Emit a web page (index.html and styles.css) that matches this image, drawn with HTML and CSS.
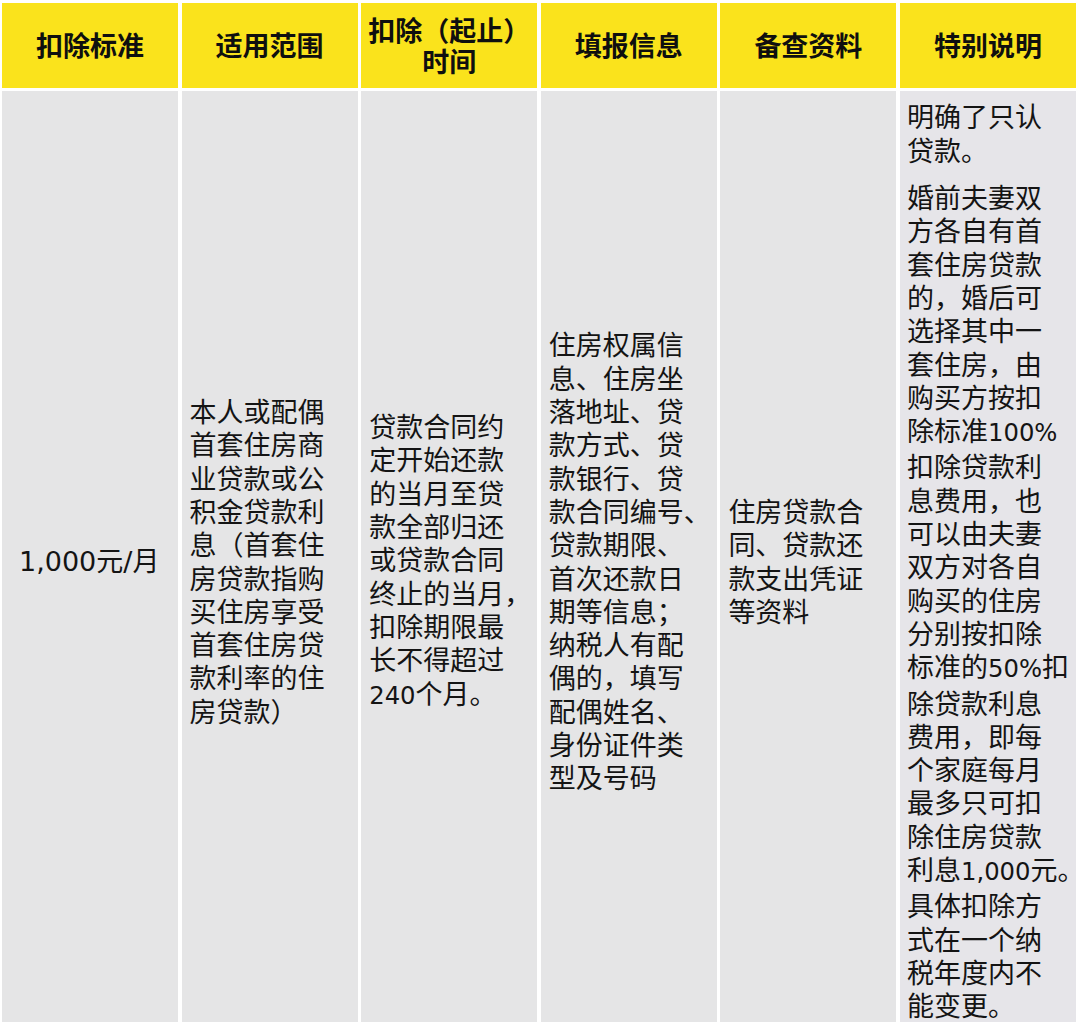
FILE: index.html
```html
<!DOCTYPE html>
<html lang="zh-CN">
<head>
<meta charset="utf-8">
<title>住房贷款利息扣除</title>
<link rel="stylesheet" href="styles.css">
</head>
<body>
<div class="table">
  <div class="th">扣除标准</div>
  <div class="th">适用范围</div>
  <div class="th">扣除（起止）<br>时间</div>
  <div class="th">填报信息</div>
  <div class="th">备查资料</div>
  <div class="th">特别说明</div>

  <div class="td first"><p><span class="num big">1,000</span>元<span class="num big">/</span>月</p></div>
  <div class="td"><p>本人或配偶<br>首套住房商<br>业贷款或公<br>积金贷款利<br>息（首套住<br>房贷款指购<br>买住房享受<br>首套住房贷<br>款利率的住<br>房贷款）</p></div>
  <div class="td"><p>贷款合同约<br>定开始还款<br>的当月至贷<br>款全部归还<br>或贷款合同<br>终止的当月，<br>扣除期限最<br>长不得超过<br><span class="num">240</span>个月。</p></div>
  <div class="td"><p>住房权属信<br>息、住房坐<br>落地址、贷<br>款方式、贷<br>款银行、贷<br>款合同编号、<br>贷款期限、<br>首次还款日<br>期等信息；<br>纳税人有配<br>偶的，填写<br>配偶姓名、<br>身份证件类<br>型及号码</p></div>
  <div class="td"><p>住房贷款合<br>同、贷款还<br>款支出凭证<br>等资料</p></div>
  <div class="td last"><p>明确了只认<br>贷款。</p><p>婚前夫妻双<br>方各自有首<br>套住房贷款<br>的，婚后可<br>选择其中一<br>套住房，由<br>购买方按扣<br>除标准<span class="num">100%</span><br>扣除贷款利<br>息费用，也<br>可以由夫妻<br>双方对各自<br>购买的住房<br>分别按扣除<br>标准的<span class="num">50%</span>扣<br>除贷款利息<br>费用，即每<br>个家庭每月<br>最多只可扣<br>除住房贷款<br>利息<span class="num">1,000</span>元。<br>具体扣除方<br>式在一个纳<br>税年度内不<br>能变更。</p></div>
</div>
</body>
</html>
```

FILE: styles.css
```css
html, body {
  margin: 0;
  padding: 0;
  background: #ffffff;
}

body {
  width: 1080px;
  height: 1025px;
  overflow: hidden;
  font-family: "Noto Sans CJK SC", "Noto Sans", sans-serif;
  color: #141414;
}

.table {
  display: grid;
  grid-template-columns: repeat(6, 176px);
  grid-template-rows: 85px 931px;
  column-gap: 3.6px;
  row-gap: 3px;
  padding: 3px 0 0 2px;
}

.th {
  background: #fae31c;
  display: flex;
  align-items: center;
  justify-content: center;
  text-align: center;
  font-weight: 700;
  font-size: 27px;
  line-height: 31px;
  color: #0f0f0f;
  padding-bottom: 2px;
}

.td {
  background: #e5e5e6;
  display: flex;
  flex-direction: column;
  justify-content: center;
  padding: 8px 0 0 8px;
  font-size: 27px;
  line-height: 33.3px;
  white-space: nowrap;
}

.td.first {
  padding-left: 17px;
}

.td.last {
  background: #e6e5e9;
  padding-left: 7px;
}

.td p {
  margin: 0;
}

.td p + p {
  margin-top: 14px;
}

.num {
  font-family: "DejaVu Sans", "Noto Sans", sans-serif;
  font-size: 0.9em;
}

.num.big {
  font-size: 1em;
}
```
